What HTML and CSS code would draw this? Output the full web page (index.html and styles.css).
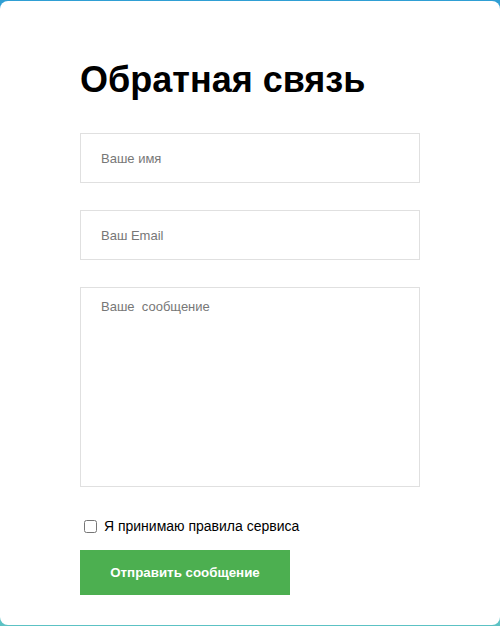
FILE: index.html
```html
<!DOCTYPE html>
<html lang="ru">
<head>
<meta charset="utf-8">
<title>Обратная связь</title>
<link rel="stylesheet" href="styles.css">
</head>
<body>
<div class="card">
  <form class="form">
    <h1 class="title">Обратная связь</h1>
    <input class="field" type="text" placeholder="Ваше имя">
    <input class="field" type="email" placeholder="Ваш Email">
    <textarea class="field area" placeholder="Ваше  сообщение"></textarea>
    <label class="agree"><input type="checkbox" class="check"> Я принимаю правила сервиса</label>
    <button class="submit" type="button">Отправить сообщение</button>
  </form>
</div>
</body>
</html>
```
FILE: styles.css
```css
html, body {
  margin: 0;
  padding: 0;
  height: 100%;
}
body {
  background: linear-gradient(to bottom, #2f9fd4, #5cc2c4);
  font-family: "Liberation Sans", Arial, sans-serif;
  padding: 1px 0 1px;
  box-sizing: border-box;
}
.card {
  background: #fff;
  border-radius: 8px;
  height: 624px;
  box-sizing: border-box;
  padding: 57px 80px 0;
}
.form {
  display: flex;
  flex-direction: column;
  align-items: flex-start;
}
.title {
  margin: 0 0 31px;
  font-size: 36px;
  line-height: 44px;
  font-weight: bold;
  color: #000;
}
.field {
  width: 340px;
  height: 50px;
  box-sizing: border-box;
  border: 1px solid #e0e0e0;
  padding: 0 20px;
  font-family: "Liberation Sans", Arial, sans-serif;
  font-size: 13px;
  color: #333;
  margin: 0 0 27px;
  outline: none;
  background: #fff;
}
.field::placeholder {
  color: #777;
}
.area {
  height: 200px;
  padding: 11px 20px;
  resize: none;
  margin-bottom: 29px;
}
.agree {
  display: flex;
  align-items: center;
  height: 20px;
  font-size: 14px;
  color: #000;
  margin-bottom: 14px;
  white-space: pre;
}
.check {
  margin: 3px 3px 3px 4px;
}
.submit {
  width: 210px;
  height: 45px;
  background: #4caf50;
  color: #fff;
  border: none;
  font-family: "Liberation Sans", Arial, sans-serif;
  font-size: 13.33px;
  font-weight: bold;
  cursor: pointer;
}
```
